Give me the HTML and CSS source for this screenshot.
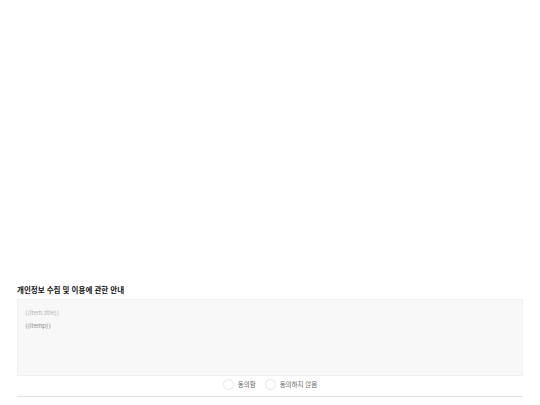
FILE: index.html
```html
<!DOCTYPE html>
<html lang="ko">
<head>
<meta charset="utf-8">
<link rel="stylesheet" href="styles.css">
</head>
<body>
<div class="page">
  <div class="spacer"></div>
  <section class="privacy">
    <h3 class="title">개인정보 수집 및 이용에 관한 안내</h3>
    <div class="terms">
      <p class="terms-title">{{item.title}}</p>
      <p class="terms-body">{{itemp}}</p>
    </div>
    <div class="agree">
      <label class="opt"><span class="radio"></span><span class="opt-text">동의함</span></label>
      <label class="opt"><span class="radio"></span><span class="opt-text">동의하지 않음</span></label>
    </div>
    <div class="divider"></div>
  </section>
</div>
</body>
</html>
```
FILE: styles.css
```css
html, body {
  margin: 0;
  padding: 0;
  background: #fff;
}
body {
  font-family: "Noto Sans CJK KR", "Noto Sans", sans-serif;
  color: #222;
}
.page {
  width: 540px;
  height: 405px;
  display: flex;
  flex-direction: column;
}
.spacer {
  height: 285px;
  flex: none;
}
.privacy {
  padding: 0 17px;
}
.title {
  margin: 0;
  font-size: 7.5px;
  line-height: 10px;
  font-weight: 700;
  color: #111;
}
.terms {
  margin-top: 4px;
  height: 77px;
  background: #f8f8f8;
  border: 1px solid #f0f0f0;
  box-sizing: border-box;
  padding: 9px 7px;
}
.terms p {
  margin: 0;
  font-family: "Inter", "Noto Sans", sans-serif;
  font-size: 6px;
  line-height: 7px;
  color: #b4b4b4;
}
.terms .terms-body {
  margin-top: 6px;
  color: #8a8a8a;
}
.agree {
  display: flex;
  justify-content: center;
  gap: 9px;
  margin-top: 3px;
}
.opt {
  display: flex;
  align-items: center;
  gap: 4px;
}
.radio {
  width: 11px;
  height: 11px;
  border-radius: 50%;
  border: 1px solid #e6e6e6;
  box-sizing: border-box;
  background: #fff;
}
.opt-text {
  font-size: 6.5px;
  line-height: 11px;
  color: #666;
}
.divider {
  margin-top: 6px;
  height: 1px;
  background: #e2e2e2;
}
```
